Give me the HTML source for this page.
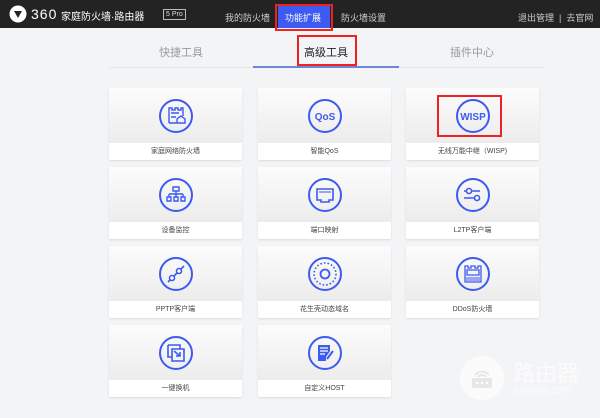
<!DOCTYPE html>
<html><head><meta charset="utf-8"><style>
*{margin:0;padding:0;box-sizing:border-box}
body{width:600px;height:418px;background:#f3f4f6;font-family:"Liberation Sans","Noto Sans CJK SC",sans-serif;position:relative;overflow:hidden}
.hd{position:absolute;left:0;top:0;width:600px;height:28px;background:#232323}
.a{position:absolute;white-space:nowrap}
.card{position:absolute;width:133px;height:72px;background:#fff;border-radius:2px;box-shadow:0 1px 2px rgba(0,0,0,.1)}
.card .top{height:55px;background:linear-gradient(#fcfcfc,#ececed)}
.card .lb{height:17px;line-height:17px;text-align:center;font-size:7px;color:#444}
.card svg{position:absolute;left:49px;top:10px}
</style></head><body>
<div class="hd"></div>
<svg class="a" style="left:9px;top:5px" width="18" height="18" viewBox="0 0 18 18"><circle cx="9" cy="9" r="8.5" fill="#fff"/><path d="M5 6 L13 6 L9 13 Z" fill="#232323"/></svg>
<div class="a" style="left:31px;top:6px;font-size:14px;color:#fff;letter-spacing:1px">360</div>
<div class="a" style="left:61px;top:8px;font-size:10px;color:#fff">家庭防火墙·路由器</div>
<div class="a" style="left:163px;top:9px;font-size:7px;color:#ddd;border:1px solid #bbb;padding:0 2px;line-height:9px">5 Pro</div>
<div class="a" style="left:225px;top:11px;font-size:9px;color:#ccc">我的防火墙</div>
<div class="a" style="left:275px;top:4px;width:58px;height:27px;border:2px solid #e22"></div>
<div class="a" style="left:278px;top:6px;width:52px;height:22px;background:#3d5af1"></div>
<div class="a" style="left:285px;top:11px;font-size:9px;color:#fff">功能扩展</div>
<div class="a" style="left:341px;top:11px;font-size:9px;color:#ccc">防火墙设置</div>
<div class="a" style="left:518px;top:11px;font-size:9px;color:#ccc">退出管理 &nbsp;| &nbsp;去官网</div>
<div class="a" style="left:159px;top:44px;font-size:11px;color:#999">快捷工具</div>
<div class="a" style="left:304px;top:44px;font-size:11px;color:#222">高级工具</div>
<div class="a" style="left:297px;top:35px;width:60px;height:31px;border:2px solid #e22"></div>
<div class="a" style="left:450px;top:44px;font-size:11px;color:#999">插件中心</div>
<div class="a" style="left:109px;top:67px;width:436px;height:1px;background:#e3e5ea"></div>
<div class="a" style="left:253px;top:66px;width:146px;height:2px;background:#6f86d8"></div>

<!-- row1 -->
<div class="card" style="left:109px;top:88px"><div class="top"></div><div class="lb">家庭网络防火墙</div>
<svg width="36" height="36" viewBox="0 0 36 36"><circle cx="18" cy="18" r="16" fill="none" stroke="#3d5af1" stroke-width="2"/><path d="M11 25V10h3v2h3v-2h3v2h3v-2h2v8M13 15h8M13 19h5M11 25h8M19 25v-4l4-3 4 3v4z" fill="none" stroke="#3d5af1" stroke-width="1.4"/></svg></div>
<div class="card" style="left:258px;top:88px"><div class="top"></div><div class="lb">智能QoS</div>
<svg width="36" height="36" viewBox="0 0 36 36"><circle cx="18" cy="18" r="16" fill="none" stroke="#3d5af1" stroke-width="2"/><text x="18" y="22" text-anchor="middle" font-size="10" font-weight="bold" fill="#3d5af1" font-family="Liberation Sans">QoS</text></svg></div>
<div class="card" style="left:406px;top:88px"><div class="top"></div><div class="lb">无线万能中继（WISP)</div>
<svg width="36" height="36" viewBox="0 0 36 36"><circle cx="18" cy="18" r="16" fill="none" stroke="#3d5af1" stroke-width="2"/><text x="18" y="22" text-anchor="middle" font-size="10" font-weight="bold" fill="#3d5af1" font-family="Liberation Sans">WISP</text></svg></div>
<div class="a" style="left:437px;top:95px;width:65px;height:42px;border:2px solid #e22"></div>
<!-- row2 -->
<div class="card" style="left:109px;top:167px"><div class="top"></div><div class="lb">设备监控</div>
<svg width="36" height="36" viewBox="0 0 36 36"><circle cx="18" cy="18" r="16" fill="none" stroke="#3d5af1" stroke-width="2"/><path d="M15 10h6v4h-6zM18 14v3M11 17h14M11 17v3M18 17v3M25 17v3M9 20h4v4H9zM16 20h4v4h-4zM23 20h4v4h-4z" fill="none" stroke="#3d5af1" stroke-width="1.4"/></svg></div>
<div class="card" style="left:258px;top:167px"><div class="top"></div><div class="lb">端口映射</div>
<svg width="36" height="36" viewBox="0 0 36 36"><circle cx="18" cy="18" r="16" fill="none" stroke="#3d5af1" stroke-width="2"/><path d="M10 12h16v11h-4v2h-8v-2h-4z" fill="none" stroke="#3d5af1" stroke-width="1.6"/><path d="M13 14v2M15 14v2M17 14v2M19 14v2M21 14v2M23 14v2" stroke="#3d5af1" stroke-width="1"/></svg></div>
<div class="card" style="left:406px;top:167px"><div class="top"></div><div class="lb">L2TP客户端</div>
<svg width="36" height="36" viewBox="0 0 36 36"><circle cx="18" cy="18" r="16" fill="none" stroke="#3d5af1" stroke-width="2"/><path d="M9 14h16M9 21h16" stroke="#3d5af1" stroke-width="1.6"/><circle cx="14" cy="14" r="2.5" fill="#fff" stroke="#3d5af1" stroke-width="1.6"/><circle cx="22" cy="21" r="2.5" fill="#fff" stroke="#3d5af1" stroke-width="1.6"/></svg></div>
<!-- row3 -->
<div class="card" style="left:109px;top:246px"><div class="top"></div><div class="lb">PPTP客户端</div>
<svg width="36" height="36" viewBox="0 0 36 36"><circle cx="18" cy="18" r="16" fill="none" stroke="#3d5af1" stroke-width="2"/><path d="M10 26L26 10" stroke="#3d5af1" stroke-width="1.6"/><circle cx="14" cy="22" r="2.5" fill="#fff" stroke="#3d5af1" stroke-width="1.6"/><circle cx="21" cy="15" r="2.5" fill="#fff" stroke="#3d5af1" stroke-width="1.6"/></svg></div>
<div class="card" style="left:258px;top:246px"><div class="top"></div><div class="lb">花生壳动态域名</div>
<svg width="36" height="36" viewBox="0 0 36 36"><circle cx="18" cy="18" r="16" fill="none" stroke="#3d5af1" stroke-width="2"/><circle cx="18" cy="18" r="11" fill="none" stroke="#3d5af1" stroke-width="1.6" stroke-dasharray="1.6 2"/><circle cx="18" cy="18" r="4.5" fill="none" stroke="#3d5af1" stroke-width="1.8"/></svg></div>
<div class="card" style="left:406px;top:246px"><div class="top"></div><div class="lb">DDoS防火墙</div>
<svg width="36" height="36" viewBox="0 0 36 36"><circle cx="18" cy="18" r="16" fill="none" stroke="#3d5af1" stroke-width="2"/><path d="M10 26V10h3v2h3v-2h4v2h3v-2h3v16zM12 14h12v5H12z" fill="none" stroke="#3d5af1" stroke-width="1.3"/><path d="M11 22h14M11 24h14" stroke="#3d5af1" stroke-width="1"/></svg></div>
<!-- row4 -->
<div class="card" style="left:109px;top:325px"><div class="top"></div><div class="lb">一键换机</div>
<svg width="36" height="36" viewBox="0 0 36 36"><circle cx="18" cy="18" r="16" fill="none" stroke="#3d5af1" stroke-width="2"/><path d="M10 10h12v4M10 10v12h4M14 14h12v12H14z" fill="none" stroke="#3d5af1" stroke-width="1.6"/><path d="M16 16l6 5M22 17v4h-4" fill="none" stroke="#3d5af1" stroke-width="1.6"/></svg></div>
<div class="card" style="left:258px;top:325px"><div class="top"></div><div class="lb">自定义HOST</div>
<svg width="36" height="36" viewBox="0 0 36 36"><circle cx="18" cy="18" r="16" fill="none" stroke="#3d5af1" stroke-width="2"/><path d="M11 10h12v6l-4 6v4h-8z" fill="#3d5af1"/><path d="M13 13h8M13 16h8M13 19h5" stroke="#fff" stroke-width="1.2"/><path d="M20 24l6-8" stroke="#3d5af1" stroke-width="2"/></svg></div>

<!-- watermark -->
<svg class="a" style="left:460px;top:356px" width="44" height="44" viewBox="0 0 44 44"><circle cx="22" cy="22" r="22" fill="#fbfbfc"/><rect x="12" y="22" width="20" height="10" rx="2" fill="#e6e7ea"/><circle cx="17" cy="27" r="1.2" fill="#fff"/><circle cx="22" cy="27" r="1.2" fill="#fff"/><circle cx="27" cy="27" r="1.2" fill="#fff"/><path d="M15 19a9 9 0 0 1 14 0M18 21a5 5 0 0 1 8 0" fill="none" stroke="#e6e7ea" stroke-width="2"/></svg>
<div class="a" style="left:513px;top:356px;font-size:22px;color:#fbfbfc">路由器</div>
<div class="a" style="left:513px;top:384px;font-size:11px;color:#fbfbfc">luyouqi.com</div>
</body></html>
